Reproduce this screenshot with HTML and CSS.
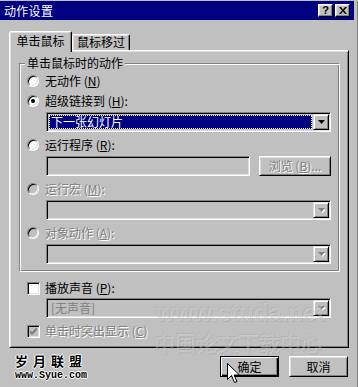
FILE: index.html
```html
<!DOCTYPE html>
<html lang="zh-CN">
<head>
<meta charset="utf-8">
<title>动作设置</title>
<link rel="stylesheet" href="styles.css">
</head>
<body>
<div class="window">
  <div class="titlebar">
    <span class="title">动作设置</span>
    <div class="caption-btns">
      <span class="cbtn cbtn-help">?</span>
      <span class="cbtn"><svg width="8" height="7" viewBox="0 0 8 7"><path d="M0 0h2l2 2.5L6 0h2L5 3.5 8 7H6L4 4.5 2 7H0l3-3.5z" fill="#000"/></svg></span>
    </div>
  </div>
  <div class="content">
    <div class="tabs">
      <div class="tab active">单击鼠标</div>
      <div class="tab">鼠标移过</div>
    </div>
    <div class="panel">
      <div class="group">
        <span class="group-label">单击鼠标时的动作</span>
        <div class="row"><span class="radio"></span><span>无动作 (<u>N</u>)</span></div>
        <div class="row gap4"><span class="radio checked"></span><span>超级链接到 (<u>H</u>):</span></div>
        <div class="combo indent">
          <div class="combo-main"><span class="selected">下一张幻灯片</span></div>
          <span class="drop"><svg width="7" height="4" viewBox="0 0 7 4"><path d="M0 0h7L3.5 4z" fill="#000"/></svg></span>
        </div>
        <div class="row"><span class="radio"></span><span>运行程序 (<u>R</u>):</span></div>
        <div class="field-row indent">
          <div class="field"></div>
          <span class="btn browse disabled-text">浏览 (<u>B</u>)...</span>
        </div>
        <div class="row disabled-text"><span class="radio off"></span><span>运行宏 (<u>M</u>):</span></div>
        <div class="combo indent">
          <div class="combo-main"></div>
          <span class="drop"><svg width="7" height="5" viewBox="0 0 7 5"><path d="M1 1h7L4.5 5z" fill="#fff"/><path d="M0 0h7L3.5 4z" fill="#808080"/></svg></span>
        </div>
        <div class="row disabled-text"><span class="radio off"></span><span>对象动作 (<u>A</u>):</span></div>
        <div class="combo indent last">
          <div class="combo-main"></div>
          <span class="drop"><svg width="7" height="5" viewBox="0 0 7 5"><path d="M1 1h7L4.5 5z" fill="#fff"/><path d="M0 0h7L3.5 4z" fill="#808080"/></svg></span>
        </div>
      </div>
      <div class="row check-row first"><span class="checkbox"></span><span>播放声音 (<u>P</u>):</span></div>
      <div class="combo sound">
        <div class="combo-main"><span class="combo-text">[无声音]</span></div>
        <span class="drop"><svg width="7" height="5" viewBox="0 0 7 5"><path d="M1 1h7L4.5 5z" fill="#fff"/><path d="M0 0h7L3.5 4z" fill="#808080"/></svg></span>
      </div>
      <div class="row check-row disabled-text"><span class="checkbox off"><svg width="7" height="7" viewBox="0 0 7 7"><path d="M0 2v3l2 2 5-5V-1L2 4z" fill="#808080"/></svg></span><span>单击时突出显示 (<u>C</u>)</span></div>
    </div>
    <div class="footer">
      <div class="logo">
        <div class="logo-cn">岁月联盟</div>
        <div class="logo-url">www.Syue.com</div>
      </div>
      <div class="buttons">
        <span class="btn default">确定</span>
        <span class="btn">取消</span>
      </div>
    </div>
  </div>
  <div class="watermark wm1">www.studa.net</div>
  <div class="watermark wm2">中国论文下载中心</div>
  <svg class="cursor" width="13" height="21" viewBox="0 0 13 21"><path d="M0.5 0.5v16l4-4 3 7 2.5-1-3-6.5h5.5z" fill="#fff" stroke="#000" stroke-width="1"/></svg>
</div>
</body>
</html>
```
FILE: styles.css
```css
* { box-sizing: border-box; }
html, body { margin: 0; padding: 0; }
body {
  width: 358px;
  height: 387px;
  background: #c0c0c0;
  font-family: "Noto Sans CJK SC", "Liberation Sans", sans-serif;
  font-size: 12px;
  color: #000;
  overflow: hidden;
}
u { text-decoration: underline; text-underline-offset: 1px; }

.window {
  position: relative;
  width: 358px;
  height: 387px;
  background: #c0c0c0;
  border-right: 1px solid #808080;
}

.titlebar {
  height: 19px;
  margin: 1px 3px 0 0;
  background: #000080;
  color: #fff;
  display: flex;
  align-items: center;
  justify-content: space-between;
  padding-left: 4px;
}
.title { line-height: 19px; font-size: 12px; letter-spacing: 0.3px; }
.caption-btns { display: flex; gap: 2px; margin-right: 4px; }
.cbtn {
  width: 15px;
  height: 13px;
  background: #c0c0c0;
  border: 1px solid;
  border-color: #fff #000 #000 #fff;
  box-shadow: inset -1px -1px #808080, inset 1px 1px #dfdfdf;
  display: flex;
  align-items: center;
  justify-content: center;
  color: #000;
}
.cbtn-help { font-family: "Liberation Sans", sans-serif; font-weight: bold; font-size: 11px; line-height: 11px; }

.content { padding: 11px 9px 0 9px; }

.tabs {
  display: flex;
  align-items: flex-end;
  height: 21px;
  margin-bottom: -2px;
  position: relative;
  z-index: 1;
}
.tab {
  height: 16px;
  width: 58px;
  margin-bottom: 2px;
  border: 1px solid;
  border-bottom: none;
  border-color: #fff #000 transparent #fff;
  border-radius: 2px 2px 0 0;
  box-shadow: inset -1px 0 #808080, inset 1px 1px #dfdfdf;
  background: #c0c0c0;
  text-align: center;
  line-height: 14px;
}
.tab.active {
  height: 21px;
  width: 63px;
  margin-bottom: 0;
  padding-top: 2px;
  border-right: 1px solid #000;
}

.panel {
  width: 340px;
  border: 1px solid;
  border-color: #fff #000 #000 #fff;
  box-shadow: inset 1px 1px #dfdfdf, inset -1px -1px #808080;
  padding: 12px 8px 8px 9px;
  display: flex;
  flex-direction: column;
}

.group {
  width: 321px;
  border: 1px solid;
  border-color: #808080 #fff #fff #808080;
  box-shadow: inset 1px 1px #fff, inset -1px -1px #808080;
  padding: 0 8px 7px 7px;
  display: flex;
  flex-direction: column;
}
.group-label {
  align-self: flex-start;
  margin: -8px 0 3px -2px;
  padding: 0 2px;
  background: #c0c0c0;
  line-height: 14px;
}

.row {
  display: flex;
  align-items: center;
  height: 16px;
  line-height: 16px;
  margin-bottom: 3px;
  white-space: nowrap;
}
.row.gap4 { margin-top: 1px; }
.indent { margin-left: 19px; margin-bottom: 5px; }
.indent.last { margin-bottom: 0; }

.radio {
  position: relative;
  width: 12px;
  height: 12px;
  margin-right: 6px;
  border-radius: 50%;
  border: 1px solid;
  border-color: #808080 #fff #fff #808080;
  box-shadow: inset 1px 1px #000, inset -1px -1px #dfdfdf;
  background: #fff;
  flex: none;
}
.radio.off { background: #c0c0c0; }
.radio.checked::after {
  content: "";
  position: absolute;
  left: 3px;
  top: 3px;
  width: 4px;
  height: 4px;
  border-radius: 50%;
  background: #000;
}

.checkbox {
  width: 13px;
  height: 13px;
  margin-right: 5px;
  border: 1px solid;
  border-color: #808080 #fff #fff #808080;
  box-shadow: inset 1px 1px #000, inset -1px -1px #dfdfdf;
  background: #fff;
  display: flex;
  align-items: center;
  justify-content: center;
  flex: none;
}
.checkbox.off { background: #c0c0c0; }

.disabled-text { color: #808080; text-shadow: 1px 1px 0 #fff; }

.combo, .field {
  height: 20px;
  border: 1px solid;
  border-color: #808080 #fff #fff #808080;
  box-shadow: inset 1px 1px #000, inset -1px -1px #dfdfdf;
  background: #c0c0c0;
}
.combo {
  display: flex;
  padding: 1px;
}
.combo-main {
  flex: 1;
  padding: 1px;
  display: flex;
}
.selected {
  flex: 1;
  background: #000080;
  color: #fff;
  outline: 1px dotted #ffffe0;
  outline-offset: -1px;
  line-height: 14px;
  padding-left: 2px;
}
.combo-text {
  color: #808080;
  line-height: 14px;
  padding-left: 2px;
}
.drop {
  width: 16px;
  height: 16px;
  border: 1px solid;
  border-color: #dfdfdf #000 #000 #dfdfdf;
  box-shadow: inset 1px 1px #fff, inset -1px -1px #808080;
  background: #c0c0c0;
  display: flex;
  align-items: center;
  justify-content: center;
  flex: none;
}

.field-row {
  display: flex;
  gap: 9px;
}
.field { flex: 1; }

.btn {
  height: 21px;
  border: 1px solid;
  border-color: #fff #000 #000 #fff;
  box-shadow: inset 1px 1px #dfdfdf, inset -1px -1px #808080;
  background: #c0c0c0;
  display: flex;
  align-items: center;
  justify-content: center;
  line-height: 14px;
  white-space: nowrap;
}
.btn.browse { width: 72px; height: 20px; }

.check-row { padding-left: 8px; margin-bottom: 2px; }
.check-row.first { margin-top: 8px; }
.combo.sound { margin-left: 27px; width: 285px; margin-bottom: 5px; }
.check-row:last-child { margin-bottom: 0; }

.footer {
  display: flex;
  justify-content: space-between;
  align-items: flex-start;
  padding-top: 8px;
}
.logo { margin: -3px 0 0 6px; }
.logo-cn {
  font-weight: bold;
  font-size: 13px;
  line-height: 16px;
  letter-spacing: 5px;
  text-shadow: 1px 0 #fff, -1px 0 #fff, 0 1px #fff, 0 -1px #fff;
}
.logo-url {
  margin-top: 2px;
  font-family: "Liberation Mono", monospace;
  font-weight: bold;
  font-size: 10px;
  line-height: 10px;
  text-shadow: 1px 0 #fff, -1px 0 #fff, 0 1px #fff, 0 -1px #fff;
}
.buttons { display: flex; gap: 10px; }
.buttons .btn { width: 59px; }
.btn.default {
  border-color: #000;
  box-shadow: inset 1px 1px #fff, inset -1px -1px #000, inset -2px -2px #808080;
}

.watermark {
  position: absolute;
  pointer-events: none;
  white-space: nowrap;
  font-weight: bold;
  color: rgba(255, 255, 255, 0.25);
  text-shadow: 1px 1px 0 rgba(90, 90, 90, 0.15), -1px -1px 0 rgba(90, 90, 90, 0.1);
}
.wm1 {
  left: 156px;
  top: 300px;
  font-family: "Liberation Sans", sans-serif;
  font-size: 24px;
  line-height: 24px;
}
.wm2 {
  left: 154px;
  top: 331px;
  font-family: "Noto Sans CJK SC", sans-serif;
  font-size: 21px;
  line-height: 21px;
}
.cursor {
  position: absolute;
  left: 227px;
  top: 362px;
}
```
